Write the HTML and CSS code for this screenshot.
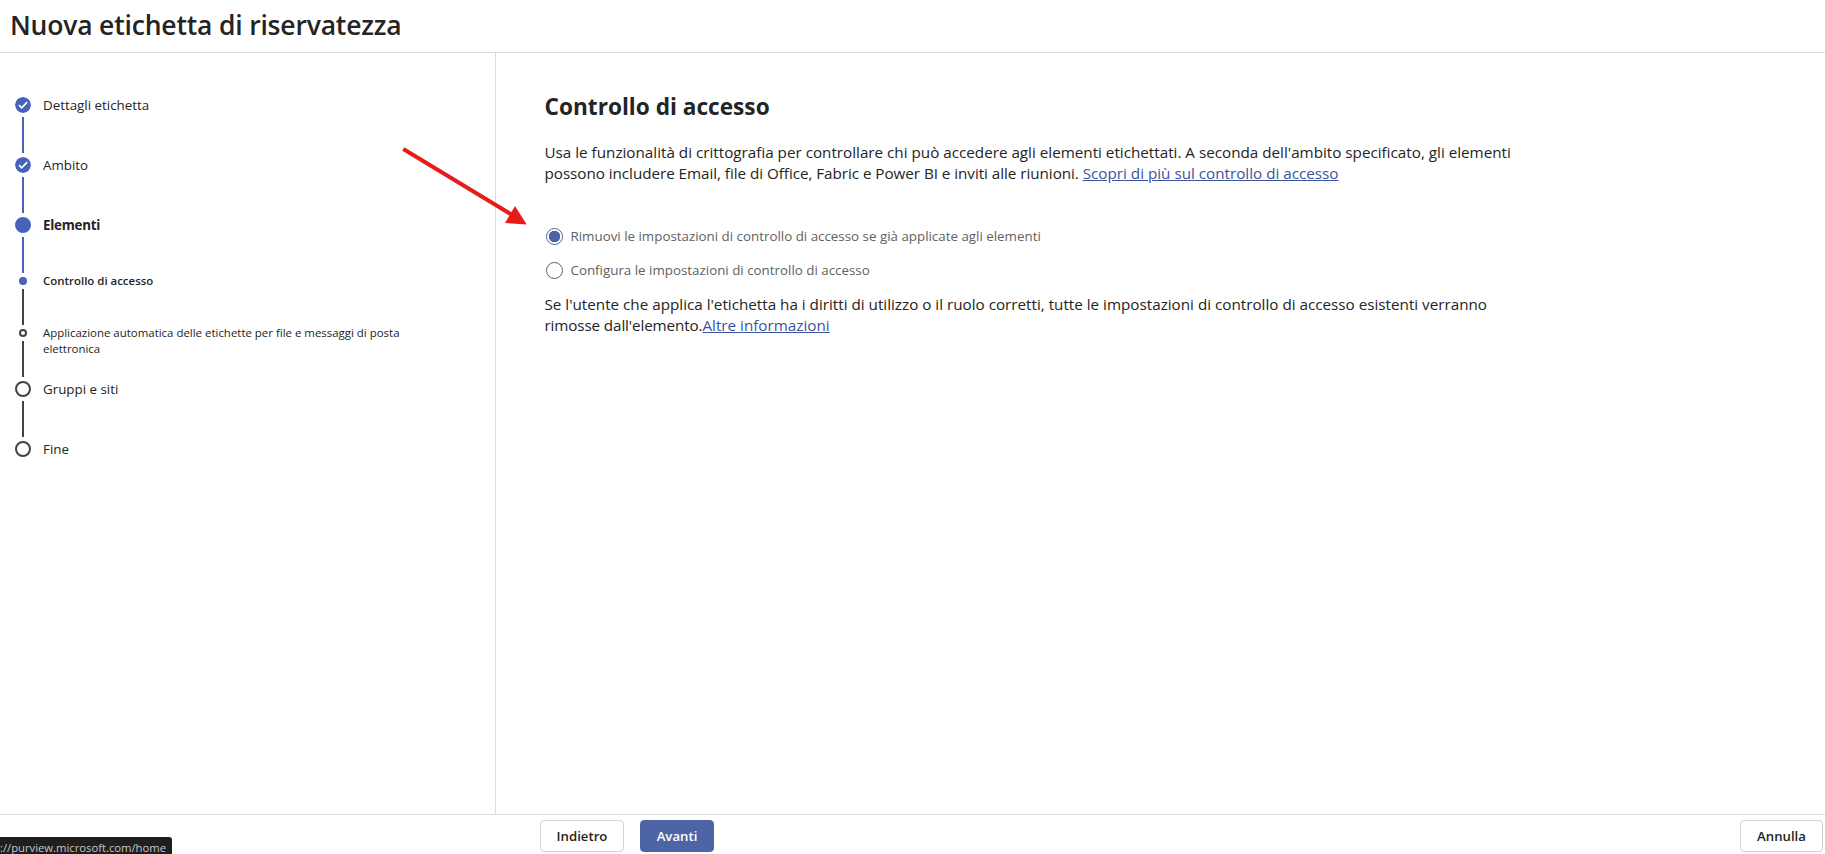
FILE: index.html
```html
<!DOCTYPE html>
<html lang="it">

<head>
    <meta charset="UTF-8">
    <meta name="viewport" content="width=device-width, initial-scale=1.0">
    <title>Nuova etichetta di riservatezza</title>
    <link rel="stylesheet" href="styles.css">
</head>

<body>
    <header class="page-header">
        <h1>Nuova etichetta di riservatezza</h1>
    </header>

    <div class="content">
        <!-- Wizard steps -->
        <nav class="sidebar">
            <ol class="steps">
                <li class="step done">
                    <div class="rail">
                        <svg class="marker" viewBox="0 0 16 16">
                            <circle cx="8" cy="8" r="8" />
                            <path d="M4 8.2 L6.7 10.8 L12.2 5.2" />
                        </svg>
                        <i class="line"></i>
                    </div>
                    <span class="step-label">Dettagli etichetta</span>
                </li>
                <li class="step done">
                    <div class="rail">
                        <svg class="marker" viewBox="0 0 16 16">
                            <circle cx="8" cy="8" r="8" />
                            <path d="M4 8.2 L6.7 10.8 L12.2 5.2" />
                        </svg>
                        <i class="line"></i>
                    </div>
                    <span class="step-label">Ambito</span>
                </li>
                <li class="step current">
                    <div class="rail">
                        <i class="marker"></i>
                        <i class="line"></i>
                    </div>
                    <span class="step-label">Elementi</span>
                </li>
                <li class="step sub current-sub">
                    <div class="rail">
                        <i class="marker"></i>
                        <i class="line"></i>
                    </div>
                    <span class="step-label">Controllo di accesso</span>
                </li>
                <li class="step sub">
                    <div class="rail">
                        <i class="marker"></i>
                        <i class="line"></i>
                    </div>
                    <span class="step-label">Applicazione automatica delle etichette per file e messaggi di posta<br>elettronica</span>
                </li>
                <li class="step">
                    <div class="rail">
                        <i class="marker"></i>
                        <i class="line"></i>
                    </div>
                    <span class="step-label">Gruppi e siti</span>
                </li>
                <li class="step">
                    <div class="rail">
                        <i class="marker"></i>
                    </div>
                    <span class="step-label">Fine</span>
                </li>
            </ol>
        </nav>

        <main class="main">
            <h2>Controllo di accesso</h2>
            <p class="intro">Usa le funzionalità di crittografia per controllare chi può accedere agli elementi etichettati. A seconda dell'ambito specificato, gli elementi<br><span class="snug">possono includere Email, file di Office, Fabric e Power BI e inviti alle riunioni. </span><a href="#">Scopri di più sul controllo di accesso</a></p>

            <label class="radio">
                <input type="radio" name="access" checked>
                <span>Rimuovi le impostazioni di controllo di accesso se già applicate agli elementi</span>
            </label>
            <label class="radio">
                <input type="radio" name="access">
                <span>Configura le impostazioni di controllo di accesso</span>
            </label>

            <p class="note">Se l'utente che applica l'etichetta ha i diritti di utilizzo o il ruolo corretti, tutte le impostazioni di controllo di accesso esistenti verranno<br><span class="tight">rimosse dall'elemento.</span><a href="#">Altre informazioni</a></p>
        </main>
    </div>

    <footer class="page-footer">
        <button type="button" class="btn">Indietro</button>
        <button type="button" class="btn primary">Avanti</button>
        <button type="button" class="btn cancel">Annulla</button>
    </footer>

    <div class="status-bar"><span>://purview.microsoft.com/home</span></div>

    <svg class="arrow" viewBox="0 0 130 82">
        <path d="M3.3 5 L114 72" />
        <polygon points="126.7,80.5 115,62 105,79" />
    </svg>
</body>

</html>
```
FILE: styles.css
```css
* {
    box-sizing: border-box;
}

body {
    margin: 0;
    height: 100vh;
    display: flex;
    flex-direction: column;
    overflow: hidden;
    background-color: #fff;
    color: #242424;
    font-family: "Open Sans", "Noto Sans", sans-serif;
    font-size: 13.35px;
}

h1, h2, p, ol {
    margin: 0;
    padding: 0;
}

a {
    color: #3b539c;
    text-underline-offset: 1px;
}

.page-header {
    height: 53px;
    padding: 7px 10px 0;
    border-bottom: 1px solid #dcdcdc;
}

.page-header h1 {
    font-size: 26.5px;
    font-weight: 600;
    line-height: 36px;
    letter-spacing: -0.18px;
}

.content {
    flex: 1;
    display: flex;
}

/* Wizard steps */
.sidebar {
    width: 496px;
    padding: 44px 15px 0;
    border-right: 1px solid #dcdcdc;
}

.steps {
    list-style: none;
}

.step {
    display: flex;
    gap: 12px;
    height: 60px;
}

.rail {
    width: 16px;
    display: flex;
    flex-direction: column;
    align-items: center;
    gap: 4px;
}

.marker {
    flex: none;
    width: 16px;
    height: 16px;
    border: 2px solid #424242;
    border-radius: 50%;
}

.line {
    width: 2px;
    height: 36px;
    background-color: #424242;
}

.done .marker {
    border: none;
}

.done circle {
    fill: #4763b9;
}

.done path {
    fill: none;
    stroke: #fff;
    stroke-width: 1.7;
}

.done .line,
.current .line {
    background-color: #4763b9;
}

.current .marker,
.current-sub .marker {
    background-color: #4763b9;
    border-color: #4763b9;
}

.step-label {
    line-height: 16px;
}

.current .step-label {
    font-weight: 700;
    letter-spacing: -0.25px;
}

.sub {
    height: 52px;
}

.sub .marker {
    width: 8px;
    height: 8px;
}

.sub .step-label {
    margin-top: -4px;
    font-size: 11.45px;
}

.current-sub .step-label {
    font-weight: 600;
}

/* Main panel */
.main {
    flex: 1;
    padding: 38px 49px 0 48.5px;
}

.main h2 {
    font-size: 22.65px;
    font-weight: 700;
    line-height: 32px;
}

.intro,
.note {
    font-size: 15.22px;
    line-height: 21px;
    white-space: nowrap;
}

.intro {
    margin: 19px 0 35px;
}

.note {
    margin-top: 7px;
}

.snug {
    letter-spacing: -0.04px;
}

.tight {
    letter-spacing: -0.12px;
}

.radio {
    display: flex;
    align-items: center;
    gap: 8px;
    height: 34px;
    color: #616161;
}

.radio input {
    appearance: none;
    width: 17px;
    height: 17px;
    margin: 0 0 0 1px;
    border: 1px solid #616161;
    border-radius: 50%;
}

.radio input:checked {
    border-color: #4d64a6;
    background: radial-gradient(circle, #4d64a6 5.5px, #fff 6px);
}

/* Footer buttons */
.page-footer {
    height: 40px;
    padding: 5px 2px 0 540px;
    display: flex;
    gap: 16px;
    border-top: 1px solid #dcdcdc;
}

.btn {
    width: 84px;
    height: 32px;
    padding: 0;
    border: 1px solid #d1d1d1;
    border-radius: 4px;
    background-color: #fff;
    color: #242424;
    font-family: inherit;
    font-size: 13.2px;
    font-weight: 600;
}

.btn.primary {
    width: 74px;
    border-color: #4d64a6;
    background-color: #4d64a6;
    color: #fff;
}

.btn.cancel {
    width: 83px;
    margin-left: auto;
}

/* Link preview in the corner */
.status-bar {
    position: absolute;
    left: 0;
    bottom: 0;
    width: 172px;
    height: 17px;
    border-top-right-radius: 3px;
    background-color: #1f1f1f;
    color: #c7c7c7;
    font-size: 11.25px;
    line-height: 21px;
    white-space: nowrap;
}

.arrow {
    position: absolute;
    left: 400px;
    top: 144px;
    width: 130px;
    height: 82px;
    fill: #e81b1b;
}

.arrow path {
    stroke: #e81b1b;
    stroke-width: 4;
}
```
